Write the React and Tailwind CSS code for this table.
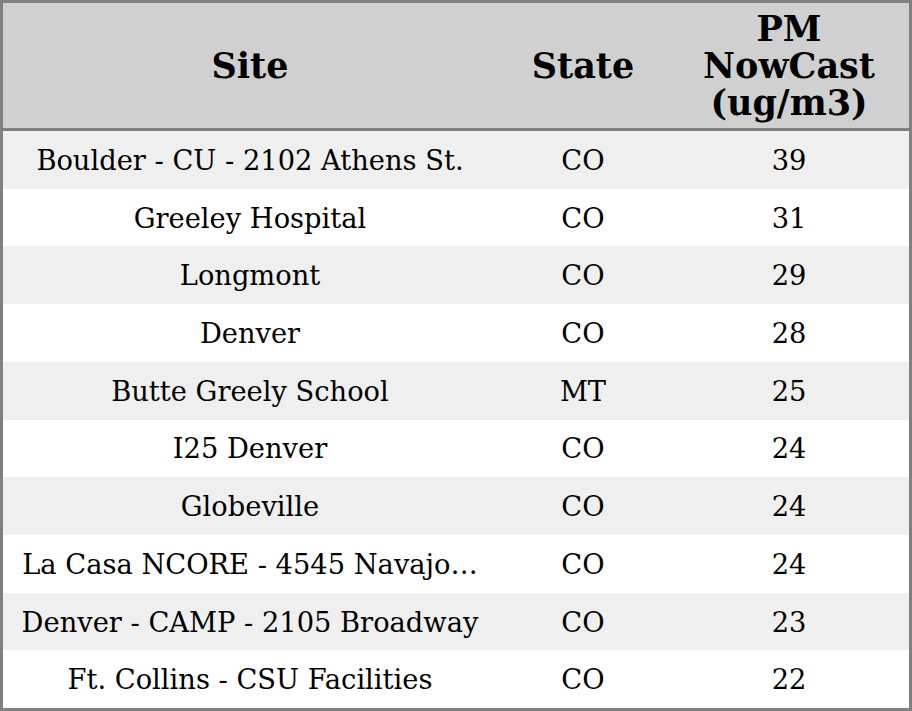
const ROWS = [
  ['Boulder - CU - 2102 Athens St.', 'CO', 39],
  ['Greeley Hospital', 'CO', 31],
  ['Longmont', 'CO', 29],
  ['Denver', 'CO', 28],
  ['Butte Greely School', 'MT', 25],
  ['I25 Denver', 'CO', 24],
  ['Globeville', 'CO', 24],
  ['La Casa NCORE - 4545 Navajo…', 'CO', 24],
  ['Denver - CAMP - 2105 Broadway', 'CO', 23],
  ['Ft. Collins - CSU Facilities', 'CO', 22],
];

export default function App() {
  return (
    <div
      className="w-[912px] h-[711px] bg-white border-[3px] border-[#808080] flex flex-col text-black"
      style={{ fontFamily: '"DejaVu Serif", serif' }}
    >
      <div className="h-[128px] shrink-0 bg-[#d0d0d0] border-b-[3px] border-[#808080] flex items-center text-[35px] font-bold leading-[37px] text-center">
        <div className="w-[494px]">Site</div>
        <div className="w-[172px]">State</div>
        <div className="flex-1">
          PM
          <br />
          NowCast
          <br />
          (ug/m3)
        </div>
      </div>
      {ROWS.map(([site, state, value], i) => (
        <div
          key={site}
          className={`flex-1 flex items-center pt-[3px] text-[27.3px] text-center ${i % 2 === 0 ? 'bg-[#efefef]' : 'bg-white'}`}
        >
          <div className="w-[494px] px-[16px] whitespace-nowrap">{site}</div>
          <div className="w-[172px]">{state}</div>
          <div className="flex-1">{value}</div>
        </div>
      ))}
    </div>
  );
}
